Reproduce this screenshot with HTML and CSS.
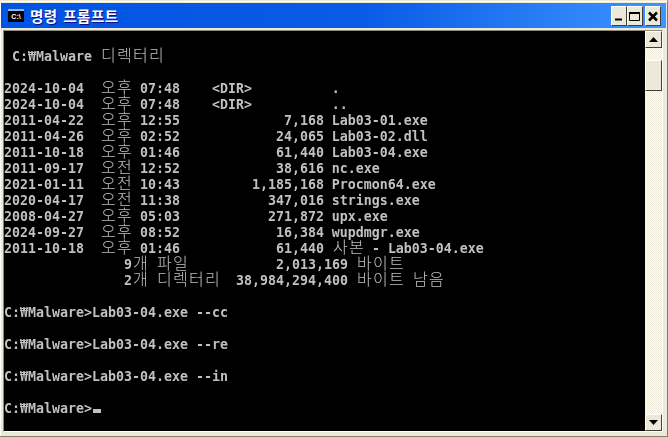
FILE: index.html
```html
<!DOCTYPE html>
<html lang="ko">
<head>
<meta charset="utf-8">
<title>명령 프롬프트</title>
<link rel="stylesheet" href="styles.css">
</head>
<body>
<div class="window">
  <header class="titlebar">
    <span class="app-icon">C:\</span>
    <span class="title">명령 프롬프트</span>
    <div class="controls">
      <button class="ctl"><svg width="14" height="18" viewBox="0 0 14 18"><rect x="3" y="11.500" width="7" height="2" fill="#000"/></svg></button>
      <button class="ctl"><svg width="14" height="18" viewBox="0 0 14 18"><path d="M1.500 6.500h10v7h-10z" fill="none" stroke="#000"/><rect x="1" y="5" width="11" height="2" fill="#000"/></svg></button>
      <button class="ctl ctl-close"><svg width="14" height="18" viewBox="0 0 14 18"><path d="M3 5.500l8 8M11 5.500l-8 8" stroke="#000" stroke-width="2.500" fill="none"/></svg></button>
    </div>
  </header>
  <div class="client">
<main class="console">
<div class="line"></div>
<div class="line"> C:₩Malware <span class="ko">디렉터리</span></div>
<div class="line"></div>
<div class="line">2024-10-04  <span class="ko">오후</span> 07:48    &lt;DIR&gt;          .</div>
<div class="line">2024-10-04  <span class="ko">오후</span> 07:48    &lt;DIR&gt;          ..</div>
<div class="line">2011-04-22  <span class="ko">오후</span> 12:55             7,168 Lab03-01.exe</div>
<div class="line">2011-04-26  <span class="ko">오후</span> 02:52            24,065 Lab03-02.dll</div>
<div class="line">2011-10-18  <span class="ko">오후</span> 01:46            61,440 Lab03-04.exe</div>
<div class="line">2011-09-17  <span class="ko">오전</span> 12:52            38,616 nc.exe</div>
<div class="line">2021-01-11  <span class="ko">오전</span> 10:43         1,185,168 Procmon64.exe</div>
<div class="line">2020-04-17  <span class="ko">오전</span> 11:38           347,016 strings.exe</div>
<div class="line">2008-04-27  <span class="ko">오후</span> 05:03           271,872 upx.exe</div>
<div class="line">2024-09-27  <span class="ko">오후</span> 08:52            16,384 wupdmgr.exe</div>
<div class="line">2011-10-18  <span class="ko">오후</span> 01:46            61,440 <span class="ko">사본</span> - Lab03-04.exe</div>
<div class="line">               9<span class="ko">개</span> <span class="ko">파일</span>           2,013,169 <span class="ko">바이트</span></div>
<div class="line">               2<span class="ko">개</span> <span class="ko">디렉터리</span>  38,984,294,400 <span class="ko">바이트</span> <span class="ko">남음</span></div>
<div class="line"></div>
<div class="line">C:₩Malware&gt;Lab03-04.exe --cc</div>
<div class="line"></div>
<div class="line">C:₩Malware&gt;Lab03-04.exe --re</div>
<div class="line"></div>
<div class="line">C:₩Malware&gt;Lab03-04.exe --in</div>
<div class="line"></div>
<div class="line">C:₩Malware&gt;<span class="cursor"></span></div>
<div class="line"></div>
</main>
    <aside class="scrollbar">
      <div class="sb-btn"><svg width="9" height="5" viewBox="0 0 9 5"><path d="M4.500 0L9 5H0z" fill="#000"/></svg></div>
      <div class="sb-track"><div class="sb-thumb"></div></div>
      <div class="sb-btn"><svg width="9" height="5" viewBox="0 0 9 5"><path d="M0 0h9L4.500 5z" fill="#000"/></svg></div>
    </aside>
  </div>
</div>
</body>
</html>
```
FILE: styles.css
```css
html, body {
  margin: 0;
  padding: 0;
  width: 668px;
  height: 437px;
  overflow: hidden;
  background: #ece9d8;
}
.window {
  width: 668px;
  height: 437px;
  box-sizing: border-box;
  display: flex;
  flex-direction: column;
  background: #ece9d8;
  padding: 3px 0 0 1px;
  border-top: 1px solid #ece9d8;
  border-right: 1px solid #7f7d72;
  border-bottom: 1px solid #7f7d72;
  box-shadow: inset 1px 1px 0 #fff;
}
.titlebar {
  height: 25px;
  flex: none;
  margin: -1px 1px 0 0;
  display: flex;
  align-items: center;
  padding: 0 5px 0 7px;
  background: linear-gradient(90deg, #0054e3 0%, #0a5ce6 55%, #3d95ff 100%);
  box-sizing: border-box;
}
.app-icon {
  width: 16px;
  height: 11px;
  background: #000;
  color: #fff;
  font: bold 7px/11px "Liberation Sans", sans-serif;
  text-align: center;
  border-top: 2px solid #9fb4dc;
  margin-right: 6px;
}
.title {
  color: #fff;
  font: bold 14.500px/20px "Noto Sans CJK KR", sans-serif;
  letter-spacing: 0.500px;
  word-spacing: 1px;
  text-shadow: 1px 1px 0 #0f1089;
  white-space: nowrap;
}
.controls {
  margin-left: auto;
  display: flex;
}
.ctl {
  box-sizing: border-box;
  width: 16px;
  height: 20px;
  padding: 0;
  border: 1px solid;
  border-color: #fff #404040 #404040 #fff;
  background: #ece9d8;
  overflow: hidden;
  display: flex;
}
.ctl-close { margin-left: 2px; }
.client {
  flex: 1;
  min-height: 0;
  display: flex;
  margin: 2px 4px 4px 2px;
  border: 1px solid;
  border-color: #8d8a7c #fff #fff #8d8a7c;
}
.console {
  flex: 1;
  background: #000;
  color: #c0c0c0;
  font: bold 13.290px/20px "DejaVu Sans Mono", monospace;
  overflow: hidden;
}
.line {
  height: 16px;
  white-space: pre;
  will-change: transform;
}
.ko {
  font: 300 16px/0 "Noto Sans CJK KR", sans-serif;
  letter-spacing: 1.280px;
  padding-left: 1px;
  margin-right: -1px;
  color: #c0c0c0;
}
.cursor {
  display: inline-block;
  width: 8px;
  height: 4px;
  margin-left: 1px;
  background: #c0c0c0;
}
.scrollbar {
  width: 17px;
  flex: none;
  display: flex;
  flex-direction: column;
}
.sb-btn {
  height: 17px;
  flex: none;
  box-sizing: border-box;
  background: #ece9d8;
  border: 1px solid;
  border-color: #fff #404040 #404040 #fff;
  display: flex;
  align-items: center;
  justify-content: center;
}
.sb-track {
  flex: 1;
  background: repeating-conic-gradient(#ece9d8 0 25%, #fff 0 50%) 0 0 / 2px 2px;
  padding-top: 12px;
}
.sb-thumb {
  height: 31px;
  box-sizing: border-box;
  background: #ece9d8;
  border: 1px solid;
  border-color: #fff #404040 #404040 #fff;
}
```
